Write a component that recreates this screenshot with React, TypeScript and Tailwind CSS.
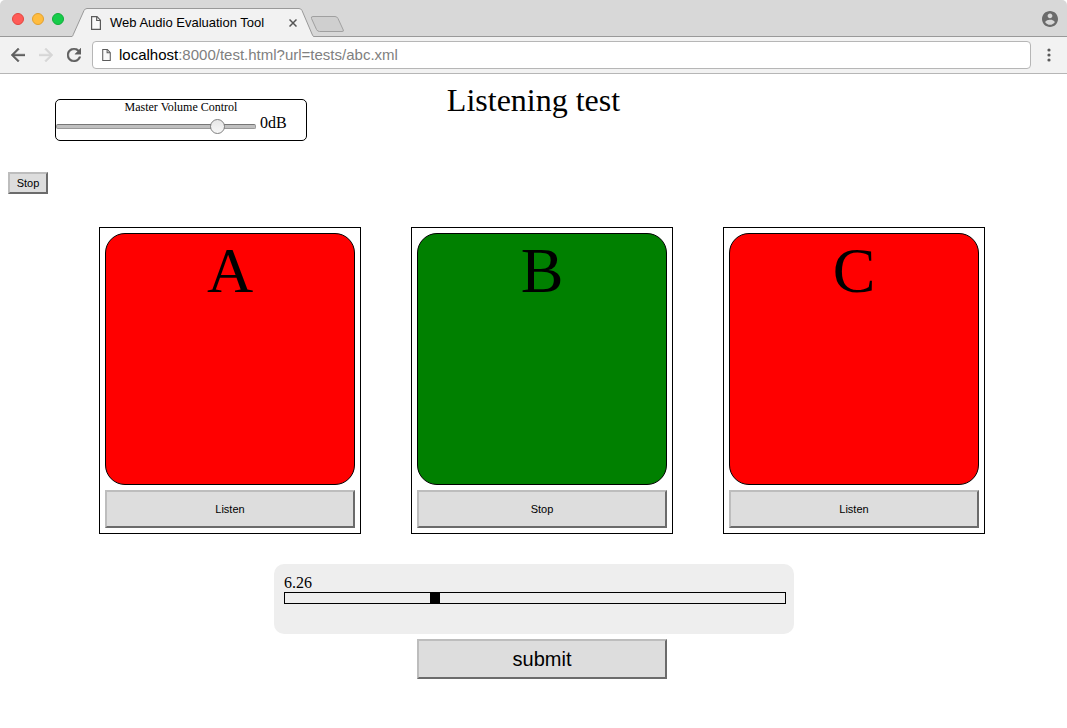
import { useState } from "react";

const bevel =
  "border-2 border-t-[#bdbdbd] border-l-[#bdbdbd] border-r-[#6b6b6b] border-b-[#6b6b6b] bg-[#ddd] font-['Liberation_Sans',Arial,sans-serif] text-black";

function PageIcon({ className }: { className: string }) {
  return (
    <svg viewBox="0 0 10 14" className={className} fill="none" stroke="#5a5a5a" strokeWidth="1.2" aria-hidden="true">
      <path d="M0.6 0.6H6L9.4 4.2V13.4H0.6Z" fill="#fafafa" />
      <path d="M5.7 0.9V4.5H9.2" />
    </svg>
  );
}

function TabStrip() {
  return (
    <div className="flex h-[37px] items-end rounded-t-[5px] border-b border-[#999] bg-[#d8d8d8]">
      <div className="flex h-[35px] w-[72px] shrink-0 items-center gap-2 pl-3">
        <button aria-label="Close window" className="size-3 rounded-full border border-[#e2463f] bg-[#ff5b57]" />
        <button aria-label="Minimize window" className="size-3 rounded-full border border-[#e1a02f] bg-[#ffbc3f]" />
        <button aria-label="Zoom window" className="size-3 rounded-full border border-[#12ac3a] bg-[#16cc4a]" />
      </div>
      <div className="relative -mb-px flex h-[29px] w-[242px] shrink-0 items-center pr-[15px] pl-[19px]">
        <svg viewBox="0 0 242 29" className="absolute inset-0 h-full w-full" aria-hidden="true">
          <path d="M0 28.5C1 28 1 27 1.500 26L12 2.500Q13 0.500 15 0.500H227Q229 0.500 230 2.500L240 26C241 28 241 28.500 242 28.500V29H0Z" fill="#f2f2f2" />
          <path d="M0 28.5C1 28 1 27 1.500 26L12 2.500Q13 0.500 15 0.500H227Q229 0.500 230 2.500L240 26C241 28 241 28.500 242 28.500" fill="none" stroke="#999" />
        </svg>
        <PageIcon className="relative h-[14px] w-[10px]" />
        <span className="relative ml-[9px] flex-1 font-['Liberation_Sans',Arial,sans-serif] text-[13px] leading-4 whitespace-nowrap text-black">
          Web Audio Evaluation Tool
        </span>
        <button aria-label="Close tab" className="relative grid size-3 place-items-center">
          <svg viewBox="0 0 8 8" className="size-2" stroke="#555" strokeWidth="1.5" aria-hidden="true">
            <path d="M0.500 0.500L7.500 7.500M7.500 0.500L0.500 7.500" />
          </svg>
        </button>
      </div>
      <button aria-label="New tab" className="mb-[2px] -ml-1 h-5 w-[34px] shrink-0">
        <svg viewBox="0 0 34 20" className="h-5 w-[34px]" aria-hidden="true">
          <path d="M3 2.500H25Q27 2.500 28 4.500L33.300 16Q34 17.500 32 17.500H9.500Q7.500 17.500 6.500 15.500L1.500 4.500Q0.700 2.500 3 2.500Z" fill="#cfcfcf" stroke="#a0a0a0" />
        </svg>
      </button>
      <button aria-label="Profile" className="mr-[9px] ml-auto h-[35px]">
        <svg viewBox="2 2 20 20" className="size-4" aria-hidden="true">
          <path fill="#6b6b6b" d="M12 2C6.480 2 2 6.480 2 12s4.480 10 10 10 10-4.480 10-10S17.520 2 12 2zm0 3c1.660 0 3 1.340 3 3s-1.340 3-3 3-3-1.340-3-3 1.340-3 3-3zm0 14.200c-2.500 0-4.710-1.280-6-3.220.030-1.990 4-3.080 6-3.080 1.990 0 5.970 1.090 6 3.080-1.290 1.940-3.500 3.220-6 3.220z" />
        </svg>
      </button>
    </div>
  );
}

function Toolbar() {
  return (
    <div className="flex h-[37px] items-center border-b border-[#b6b6b6] bg-[#f2f2f2] pr-4 pl-[11px]">
      <button aria-label="Back">
        <svg viewBox="4 4 16 16" className="size-[14px]" aria-hidden="true">
          <path fill="#5f5f5f" stroke="#5f5f5f" strokeWidth="0.5" d="M20 11H7.830l5.590-5.590L12 4l-8 8 8 8 1.410-1.410L7.830 13H20v-2z" />
        </svg>
      </button>
      <button aria-label="Forward" className="ml-[14px]">
        <svg viewBox="4 4 16 16" className="size-[14px]" aria-hidden="true">
          <path fill="#d6d6d6" stroke="#d6d6d6" strokeWidth="0.5" d="M12 4l-1.410 1.410L16.170 11H4v2h12.170l-5.580 5.590L12 20l8-8z" />
        </svg>
      </button>
      <button aria-label="Reload" className="ml-[14px]">
        <svg viewBox="4 4 16 16" className="size-[14px]" aria-hidden="true">
          <path fill="#5f5f5f" stroke="#5f5f5f" strokeWidth="0.5" d="M17.650 6.350C16.200 4.900 14.210 4 12 4c-4.420 0-7.990 3.580-7.990 8s3.570 8 7.990 8c3.730 0 6.840-2.550 7.730-6h-2.080c-.82 2.330-3.040 4-5.650 4-3.310 0-6-2.690-6-6s2.690-6 6-6c1.660 0 3.140.69 4.220 1.780L13 11h7V4l-2.350 2.350z" />
        </svg>
      </button>
      <div className="ml-[11px] flex h-7 flex-1 items-center rounded-[4px] border border-[#b6b6b6] bg-white pl-[9px]">
        <PageIcon className="h-3 w-[9px]" />
        <a href="#top" className="ml-2 font-['Liberation_Sans',Arial,sans-serif] text-[15px] leading-5 text-[#808080]">
          <span className="text-black">localhost</span>:8000/test.html?url=tests/abc.xml
        </a>
      </div>
      <button aria-label="Menu" className="ml-4">
        <svg viewBox="0 0 4 14" className="h-[14px] w-1" fill="#5a5a5a" aria-hidden="true">
          <circle cx="2" cy="2" r="1.600" />
          <circle cx="2" cy="7" r="1.600" />
          <circle cx="2" cy="12" r="1.600" />
        </svg>
      </button>
    </div>
  );
}

function MasterVolume() {
  const [volume, setVolume] = useState(83.5);
  return (
    <div className="mt-[17px] ml-[55px] h-[42px] w-[252px] rounded-[5px] border border-black">
      <label htmlFor="volume" className="block text-center text-[12px] leading-[14px]">
        Master Volume Control
      </label>
      <div className="flex h-[18px] items-center gap-1">
        <input
          id="volume"
          type="range"
          min={0}
          max={100}
          step="any"
          value={volume}
          onChange={(e) => setVolume(Number(e.target.value))}
          className="mt-[7px] h-[15px] w-[200px] appearance-none bg-transparent [&::-webkit-slider-runnable-track]:h-[5px] [&::-webkit-slider-runnable-track]:rounded-[2px] [&::-webkit-slider-runnable-track]:border [&::-webkit-slider-runnable-track]:border-[#999] [&::-webkit-slider-runnable-track]:border-t-[#777] [&::-webkit-slider-runnable-track]:bg-[#c0c0c0] [&::-webkit-slider-thumb]:-mt-[6px] [&::-webkit-slider-thumb]:size-[15px] [&::-webkit-slider-thumb]:appearance-none [&::-webkit-slider-thumb]:rounded-full [&::-webkit-slider-thumb]:border [&::-webkit-slider-thumb]:border-[#808080] [&::-webkit-slider-thumb]:bg-linear-to-b [&::-webkit-slider-thumb]:from-[#e6e6e6] [&::-webkit-slider-thumb]:to-[#f7f7f7]"
        />
        <output htmlFor="volume" className="text-base leading-[18px]">
          0dB
        </output>
      </div>
    </div>
  );
}

function Fragment({ name, playing, onToggle }: { name: string; playing: boolean; onToggle: () => void }) {
  return (
    <section className="flex w-[262px] flex-col gap-[5px] border border-black p-[5px]">
      <div
        className={`h-[252px] rounded-[20px] border border-black text-center text-[64px] leading-[74px] ${playing ? "bg-[#008000]" : "bg-[#f00]"}`}
      >
        {name}
      </div>
      <button onClick={onToggle} className={`${bevel} h-[38px] text-[11px]`}>
        {playing ? "Stop" : "Listen"}
      </button>
    </section>
  );
}

export default function App() {
  const [playing, setPlaying] = useState<string | null>("B");
  const [rating, setRating] = useState(29.6);

  return (
    <div id="top" className="min-h-screen bg-white font-['Liberation_Serif','Times_New_Roman',serif] text-black">
      <TabStrip />
      <Toolbar />
      <main className="pt-2">
        <header className="grid grid-cols-[1fr_auto_1fr] items-start">
          <MasterVolume />
          <h1 className="text-[32px] leading-[37px]">Listening test</h1>
        </header>
        <button onClick={() => setPlaying(null)} className={`${bevel} mt-[31px] ml-2 block h-[22px] w-10 text-[11px]`}>
          Stop
        </button>
        <div className="mt-[33px] flex flex-wrap justify-center gap-[50px] pl-[17px]">
          {["A", "B", "C"].map((name) => (
            <Fragment
              key={name}
              name={name}
              playing={playing === name}
              onToggle={() => setPlaying(playing === name ? null : name)}
            />
          ))}
        </div>
        <div className="mt-[30px] flex justify-center pl-px">
          <div className="h-[70px] w-[520px] rounded-[10px] bg-[#eee] px-[10px] pt-[10px]">
            <label htmlFor="rating" className="block text-base leading-[18px]">
              6.26
            </label>
            <input
              id="rating"
              type="range"
              min={0}
              max={100}
              step="any"
              value={rating}
              onChange={(e) => setRating(Number(e.target.value))}
              className="block h-3 w-[502px] appearance-none border border-black bg-transparent [&::-webkit-slider-thumb]:h-[10px] [&::-webkit-slider-thumb]:w-[10px] [&::-webkit-slider-thumb]:appearance-none [&::-webkit-slider-thumb]:bg-black"
            />
          </div>
        </div>
        <div className="mt-[5px] flex justify-center pl-[17px]">
          <button className={`${bevel} h-10 w-[250px] text-[20px]`}>submit</button>
        </div>
      </main>
    </div>
  );
}
